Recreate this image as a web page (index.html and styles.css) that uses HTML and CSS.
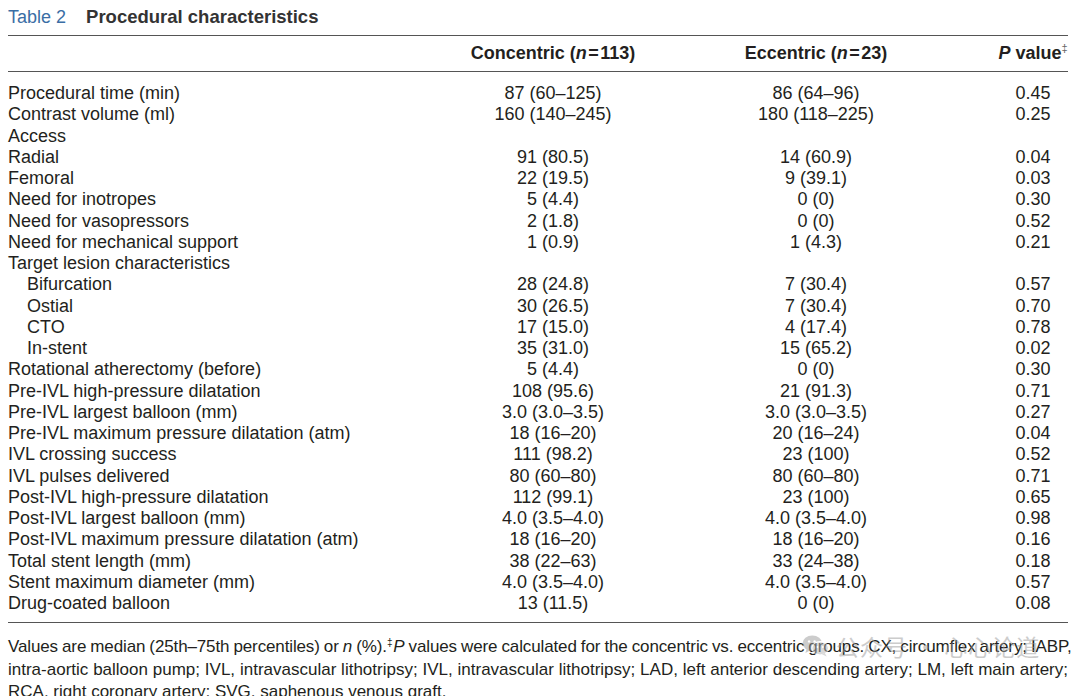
FILE: index.html
```html
<!DOCTYPE html>
<html lang="en">
<head>
<meta charset="utf-8">
<title>Table 2 Procedural characteristics</title>
<link rel="stylesheet" href="styles.css">
</head>
<body>
<div class="page">
  <div class="caption"><span class="label">Table 2</span><span class="title">Procedural characteristics</span></div>
  <table class="data">
    <colgroup>
      <col class="c-label"><col class="c-conc"><col class="c-ecc"><col class="c-p">
    </colgroup>
    <thead>
      <tr>
        <th></th>
        <th>Concentric (<i>n</i>&#8202;=&#8202;113)</th>
        <th>Eccentric (<i>n</i>&#8202;=&#8202;23)</th>
        <th class="p"><i>P</i> value<sup>‡</sup></th>
      </tr>
    </thead>
    <tbody>
      <tr><td>Procedural time (min)</td><td>87 (60–125)</td><td>86 (64–96)</td><td class="p">0.45</td></tr>
      <tr><td>Contrast volume (ml)</td><td>160 (140–245)</td><td>180 (118–225)</td><td class="p">0.25</td></tr>
      <tr><td>Access</td><td></td><td></td><td class="p"></td></tr>
      <tr><td>Radial</td><td>91 (80.5)</td><td>14 (60.9)</td><td class="p">0.04</td></tr>
      <tr><td>Femoral</td><td>22 (19.5)</td><td>9 (39.1)</td><td class="p">0.03</td></tr>
      <tr><td>Need for inotropes</td><td>5 (4.4)</td><td>0 (0)</td><td class="p">0.30</td></tr>
      <tr><td>Need for vasopressors</td><td>2 (1.8)</td><td>0 (0)</td><td class="p">0.52</td></tr>
      <tr><td>Need for mechanical support</td><td>1 (0.9)</td><td>1 (4.3)</td><td class="p">0.21</td></tr>
      <tr><td>Target lesion characteristics</td><td></td><td></td><td class="p"></td></tr>
      <tr><td class="sub">Bifurcation</td><td>28 (24.8)</td><td>7 (30.4)</td><td class="p">0.57</td></tr>
      <tr><td class="sub">Ostial</td><td>30 (26.5)</td><td>7 (30.4)</td><td class="p">0.70</td></tr>
      <tr><td class="sub">CTO</td><td>17 (15.0)</td><td>4 (17.4)</td><td class="p">0.78</td></tr>
      <tr><td class="sub">In-stent</td><td>35 (31.0)</td><td>15 (65.2)</td><td class="p">0.02</td></tr>
      <tr><td>Rotational atherectomy (before)</td><td>5 (4.4)</td><td>0 (0)</td><td class="p">0.30</td></tr>
      <tr><td>Pre-IVL high-pressure dilatation</td><td>108 (95.6)</td><td>21 (91.3)</td><td class="p">0.71</td></tr>
      <tr><td>Pre-IVL largest balloon (mm)</td><td>3.0 (3.0–3.5)</td><td>3.0 (3.0–3.5)</td><td class="p">0.27</td></tr>
      <tr><td>Pre-IVL maximum pressure dilatation (atm)</td><td>18 (16–20)</td><td>20 (16–24)</td><td class="p">0.04</td></tr>
      <tr><td>IVL crossing success</td><td>111 (98.2)</td><td>23 (100)</td><td class="p">0.52</td></tr>
      <tr><td>IVL pulses delivered</td><td>80 (60–80)</td><td>80 (60–80)</td><td class="p">0.71</td></tr>
      <tr><td>Post-IVL high-pressure dilatation</td><td>112 (99.1)</td><td>23 (100)</td><td class="p">0.65</td></tr>
      <tr><td>Post-IVL largest balloon (mm)</td><td>4.0 (3.5–4.0)</td><td>4.0 (3.5–4.0)</td><td class="p">0.98</td></tr>
      <tr><td>Post-IVL maximum pressure dilatation (atm)</td><td>18 (16–20)</td><td>18 (16–20)</td><td class="p">0.16</td></tr>
      <tr><td>Total stent length (mm)</td><td>38 (22–63)</td><td>33 (24–38)</td><td class="p">0.18</td></tr>
      <tr><td>Stent maximum diameter (mm)</td><td>4.0 (3.5–4.0)</td><td>4.0 (3.5–4.0)</td><td class="p">0.57</td></tr>
      <tr><td>Drug-coated balloon</td><td>13 (11.5)</td><td>0 (0)</td><td class="p">0.08</td></tr>
    </tbody>
  </table>
  <div class="notes">
    <div class="line just tight">Values are median (25th–75th percentiles) or <i>n</i> (%).<sup>‡</sup><i>P</i> values were calculated for the concentric vs. eccentric groups. CX, circumflex artery; IABP,</div>
    <div class="line just">intra-aortic balloon pump; IVL, intravascular lithotripsy; IVL, intravascular lithotripsy; LAD, left anterior descending artery; LM, left main artery;</div>
    <div class="line">RCA, right coronary artery; SVG, saphenous venous graft.</div>
    <div class="watermark">
      <svg class="wm-logo" viewBox="0 0 30 26" width="28" height="24" aria-hidden="true">
        <ellipse cx="11" cy="10" rx="10.5" ry="8.5" fill="#9a9a9a"/>
        <path d="M5 16 L3.5 20.5 L9 17.5 Z" fill="#9a9a9a"/>
        <ellipse cx="19.5" cy="15.5" rx="9" ry="7.2" fill="#b4b4b4" stroke="#fff" stroke-width="1.2"/>
        <path d="M24.5 20.5 L26.5 24.5 L21 21.8 Z" fill="#b4b4b4"/>
        <circle cx="7.5" cy="8" r="1.3" fill="#fff"/>
        <circle cx="13.5" cy="8" r="1.3" fill="#fff"/>
        <circle cx="16.5" cy="14" r="1.1" fill="#fff"/>
        <circle cx="22.5" cy="14" r="1.1" fill="#fff"/>
      </svg>
      <span class="wm-text">公众号 · 心心论道</span>
    </div>
  </div>
</div>
</body>
</html>
```

FILE: styles.css
```css
html, body {
  margin: 0;
  padding: 0;
  background: #ffffff;
}

body {
  font-family: "Liberation Sans", Arial, "Noto Sans CJK SC", sans-serif;
  color: #231f20;
}

.page {
  width: 1060px;
  padding: 0 12px 0 8px;
}

.caption {
  padding-top: 6px;
  height: 22px;
  line-height: 22px;
  font-size: 18px;
  margin-bottom: 7px;
  white-space: nowrap;
}

.caption .label {
  color: #3a6ea5;
  margin-right: 20px;
}

.caption .title {
  font-size: 18.5px;
  font-weight: 700;
  color: #333333;
}

.data {
  width: 1060px;
  table-layout: fixed;
  border-collapse: collapse;
  font-size: 18px;
}

.c-label { width: 432px; }
.c-conc { width: 226px; }
.c-ecc { width: 300px; }
.c-p { width: 102px; }

.data thead tr {
  border-top: 1px solid #555555;
  border-bottom: 1px solid #555555;
}

.data th {
  height: 35px;
  padding: 0;
  line-height: 35px;
  font-weight: 700;
  text-align: center;
  white-space: nowrap;
}

.data td {
  padding: 0;
  line-height: 21.25px;
  height: 21.25px;
  text-align: center;
  white-space: nowrap;
}

.data td:first-child {
  text-align: left;
}

.data td.sub {
  padding-left: 19px;
}

.data .p {
  padding-left: 32px;
}

.data tbody tr:first-child td {
  padding-top: 11px;
}

.data tbody tr:last-child td {
  padding-bottom: 8px;
}

.data tbody tr:last-child {
  border-bottom: 1px solid #555555;
}

.data sup {
  font-size: 11px;
  font-weight: 400;
  color: #666;
  line-height: 0;
  vertical-align: 7px;
}

.notes {
  position: relative;
  margin-top: 13px;
  font-size: 17px;
  line-height: 22.5px;
}

.notes .line {
  white-space: nowrap;
}

.notes .just {
  text-align: justify;
  text-align-last: justify;
}

.notes .tight {
  letter-spacing: -0.13px;
  word-spacing: -0.5px;
}

.notes sup {
  font-size: 10px;
  line-height: 0;
  vertical-align: 6px;
  margin-right: 1px;
}

.watermark {
  position: absolute;
  left: 794px;
  top: -5px;
  display: flex;
  align-items: center;
  gap: 6px;
  opacity: 0.5;
  pointer-events: none;
}

.wm-logo {
  display: block;
}

.wm-text {
  font-family: "Noto Sans CJK SC", sans-serif;
  font-size: 23px;
  line-height: 30px;
  color: #9a9a9a;
  letter-spacing: 1px;
}
```
